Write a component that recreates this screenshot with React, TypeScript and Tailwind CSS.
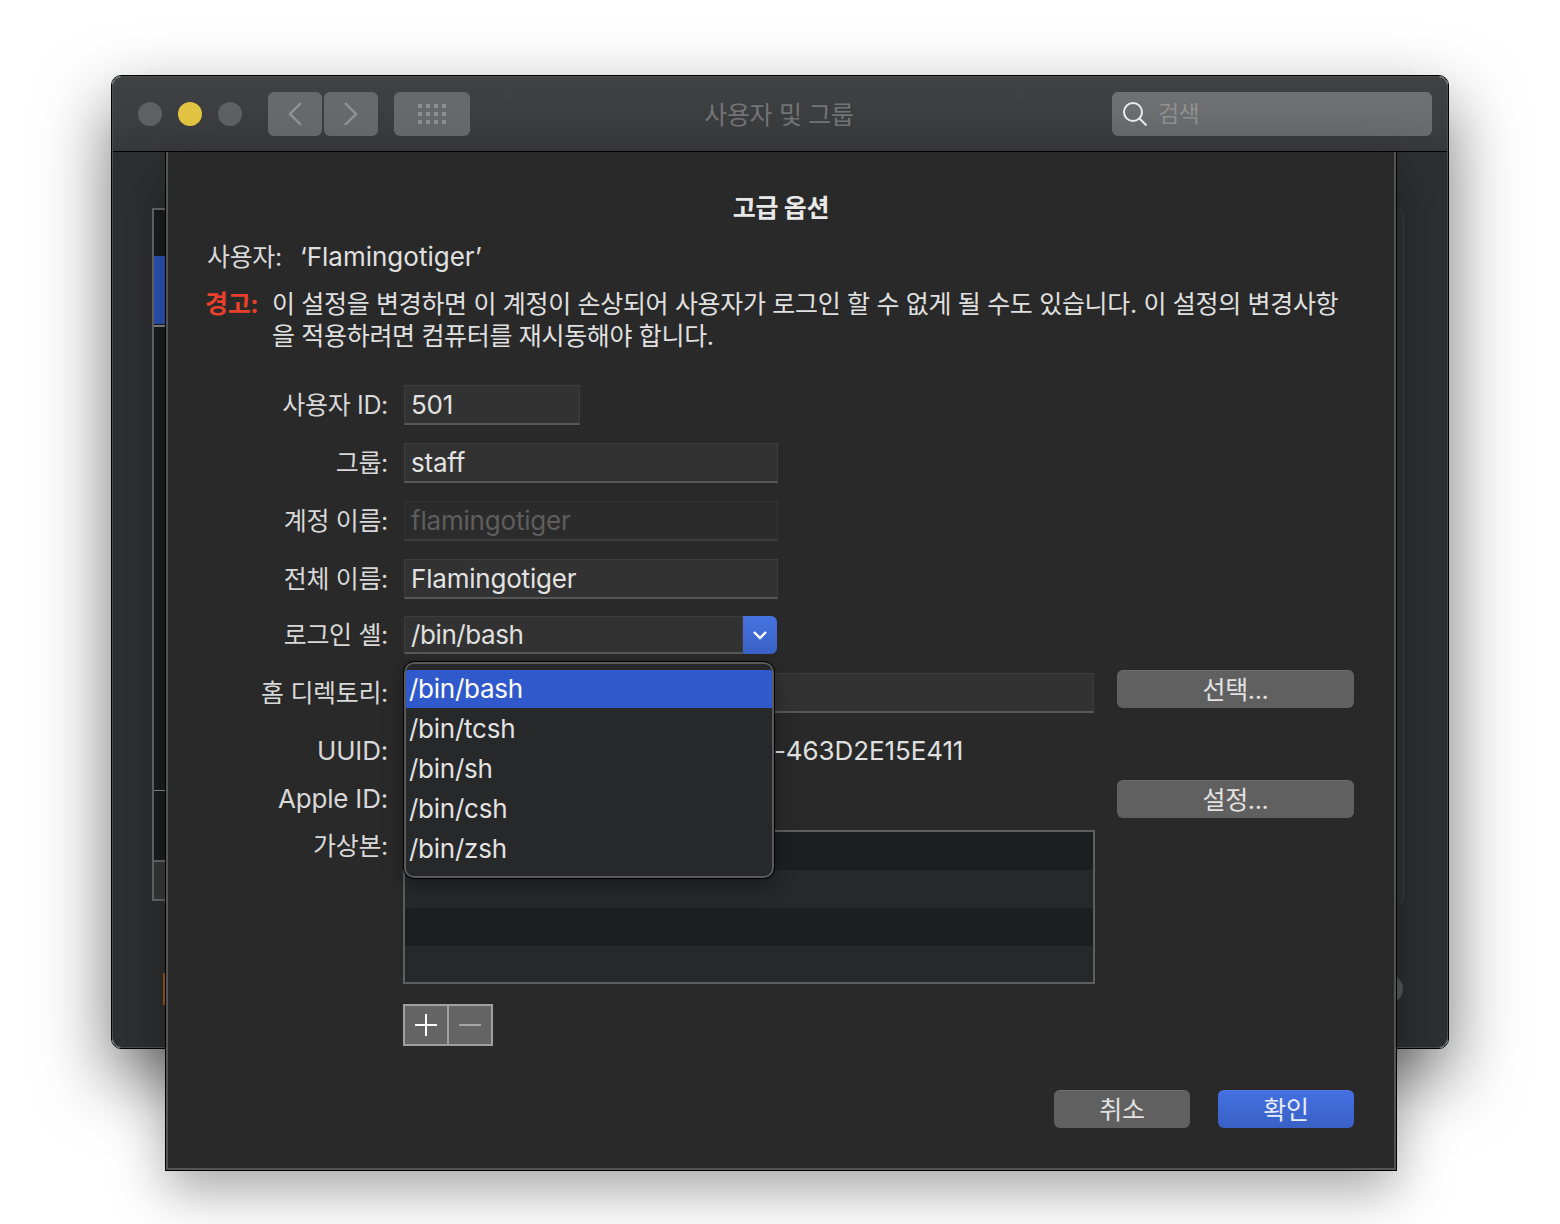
import type { ReactNode } from "react";

const shells = ["/bin/bash", "/bin/tcsh", "/bin/sh", "/bin/csh", "/bin/zsh"];

const Ko = ({ children, className = "" }: { children: ReactNode; className?: string }) => (
  <span className={`text-[25px] tracking-[-0.33px] ${className}`}>{children}</span>
);

const Field = ({ value, width = "w-[374px]", disabled = false }: { value?: string; width?: string; disabled?: boolean }) => (
  <div
    className={`h-10 ${width} flex items-center px-[6px] border border-b-2 ${
      disabled
        ? "bg-[#2b2b2b] border-[#343434] border-b-[#3c3c3c] text-[#5e5e5e]"
        : "bg-[#323232] border-[#3d3d3d] border-b-[#585858] text-[#e2e2e2]"
    }`}
  >
    {value}
  </div>
);

const Row = ({ label, className = "h-10", children }: { label: ReactNode; className?: string; children?: ReactNode }) => (
  <div className={`flex items-center ${className}`}>
    <div className="w-[220px] text-right shrink-0 text-[#d8d8d8]">{label}</div>
    <div className="ml-4 flex items-center grow">{children}</div>
  </div>
);

const MacButton = ({ label, width = "w-[237px]", primary = false }: { label: string; width?: string; primary?: boolean }) => (
  <button
    className={`block h-[38px] ${width} rounded-md border-t text-center ${
      primary
        ? "bg-gradient-to-b from-[#4470e2] to-[#3960c4] border-[#5079e6] text-[#e8edfb]"
        : "bg-[#606060] border-[#6c6c6c] text-[#e2e2e2]"
    }`}
  >
    <Ko>{label}</Ko>
  </button>
);

const Toolbar = () => (
  <div className="h-[75px] flex items-center border-b border-black bg-gradient-to-b from-[#414245] to-[#38393b]">
    <div className="flex items-center gap-4 ml-[25px]">
      <div className="w-6 h-6 rounded-full bg-[#5f6063]" />
      <div className="w-6 h-6 rounded-full bg-[#e2c342]" />
      <div className="w-6 h-6 rounded-full bg-[#5f6063]" />
    </div>
    <div className="flex gap-0.5 ml-[26px]">
      <div className="w-[54px] h-11 rounded-md bg-[#68696b] flex items-center justify-center">
        <svg width="16" height="26" viewBox="0 0 16 26" fill="none" stroke="#929395" strokeWidth="2.4">
          <path d="M14 2 3 13l11 11" />
        </svg>
      </div>
      <div className="w-[54px] h-11 rounded-md bg-[#68696b] flex items-center justify-center">
        <svg width="16" height="26" viewBox="0 0 16 26" fill="none" stroke="#929395" strokeWidth="2.4">
          <path d="m2 2 11 11L2 24" />
        </svg>
      </div>
    </div>
    <div className="w-[76px] h-11 rounded-md bg-[#68696b] ml-4 flex items-center justify-center">
      <div className="grid grid-cols-4 gap-x-1 gap-y-1">
        {Array.from({ length: 12 }).map((_, i) => (
          <div key={i} className="w-1 h-1 bg-[#8e8f91]" />
        ))}
      </div>
    </div>
    <div className="grow text-center text-[#737476] pr-[24px] mt-0.5">
      <Ko>사용자 및 그룹</Ko>
    </div>
    <div className="w-[320px] h-11 mr-[15px] rounded-md bg-gradient-to-b from-[#707173] to-[#68696b] flex items-center pl-[10px]">
      <svg width="26" height="26" viewBox="0 0 26 26" fill="none" stroke="#ececec" strokeWidth="2">
        <circle cx="11" cy="11" r="9" />
        <path d="m17.5 17.5 7 7" />
      </svg>
      <span className="ml-[10px] text-[23px] tracking-[-0.6px] text-[#8f9092]">검색</span>
    </div>
  </div>
);

const BackgroundBody = () => (
  <div className="flex justify-between pl-[39px] pr-[43px] pt-14 h-[895px] bg-[#2e2f31]">
    <div className="w-10">
      <div className="h-[693px] border-2 border-[#6a6a6a] bg-[#1c1d1f] flex flex-col">
        <div className="h-[46px]" />
        <div className="h-[68px] bg-[#2e55bb]" />
        <div className="h-[2px] bg-[#8a8a8a] mt-px" />
        <div className="h-[463px]" />
        <div className="h-px bg-[#8a8a8a]" />
        <div className="h-[69px]" />
        <div className="grow border-t-2 border-[#6a6a6a] bg-[#3a3a3a]" />
      </div>
      <div className="ml-[11px] mt-[72px] w-[2px] h-8 bg-[#a85a10]" />
    </div>
    <div className="w-10">
      <div className="h-[697px] rounded-lg border border-[#3e3f41] bg-[#313234]" />
      <div className="mt-[70px] ml-[11px] w-7 h-7 rounded-full bg-[#58595b]" />
    </div>
  </div>
);

const ShellMenu = () => (
  <div className="absolute left-[236px] top-[510px] w-[370px] h-[216px] rounded-[10px] border-2 border-[#5a5a5a] outline outline-black bg-[#27282a] pt-1.5 overflow-hidden tracking-[-0.25px] shadow-[0_8px_20px_rgba(0,0,0,0.35)]">
    {shells.map((s, i) => (
      <div
        key={s}
        className={`pl-[3px] flex items-center ${i === 0 ? "h-[38px] bg-[#3059cb] text-white" : "h-10 text-[#e2e2e2]"} ${
          i === 1 ? "mt-px" : ""
        }`}
      >
        {s}
      </div>
    ))}
  </div>
);

const Sheet = () => (
  <div className="absolute left-[165px] top-[152px] w-[1232px] h-[1019px] border border-black border-t-0 shadow-[0_20px_50px_rgba(0,0,0,0.35)]">
    <div className="relative h-full border-2 border-t-0 border-[#545454] bg-[#292929] text-[#e0e0e0]">
      <div className="pt-10 h-[71px] text-center font-bold text-[#e8e8e8]">
        <Ko>고급 옵션</Ko>
      </div>
      <div className="mt-[18px] h-8 ml-[39px] flex">
        <Ko className="text-[#d8d8d8]">사용자:</Ko>
        <span className="ml-[18px] tracking-normal">‘Flamingotiger’</span>
      </div>
      <div className="mt-[15px] flex ml-[37px]">
        <Ko className="font-bold text-[#e8402a] w-[67px] shrink-0">경고:</Ko>
        <Ko className="whitespace-nowrap">
          이 설정을 변경하면 이 계정이 손상되어 사용자가 로그인 할 수 없게 될 수도 있습니다. 이 설정의 변경사항
          <br />을 적용하려면 컴퓨터를 재시동해야 합니다.
        </Ko>
      </div>

      <Row label={<Ko>사용자 ID:</Ko>} className="mt-[33px] h-10">
        <Field value="501" width="w-[176px]" />
      </Row>
      <Row label={<Ko>그룹:</Ko>} className="mt-[18px] h-10">
        <Field value="staff" />
      </Row>
      <Row label={<Ko>계정 이름:</Ko>} className="mt-[18px] h-10">
        <Field value="flamingotiger" disabled />
      </Row>
      <Row label={<Ko>전체 이름:</Ko>} className="mt-[18px] h-10">
        <Field value="Flamingotiger" />
      </Row>
      <Row label={<Ko>로그인 셸:</Ko>} className="mt-[17px] h-[38px]">
        <div className="flex w-[373px] h-[38px]">
          <div className="grow flex items-center px-[6px] tracking-[-0.4px] bg-[#323232] border border-b-2 border-[#3d3d3d] border-b-[#585858]">/bin/bash</div>
          <div className="w-[34px] rounded-r-md bg-gradient-to-b from-[#4672e0] to-[#3a62c6] flex items-center justify-center">
            <svg width="16" height="10" viewBox="0 0 16 10" fill="none" stroke="#ffffff" strokeWidth="2.4">
              <path d="m2 2 6 6 6-6" />
            </svg>
          </div>
        </div>
      </Row>
      <div className="mt-[19px] flex items-center h-10">
        <div className="w-[220px] text-right text-[#d8d8d8]">
          <Ko>홈 디렉토리:</Ko>
        </div>
        <div className="ml-4">
          <Field width="w-[690px]" />
        </div>
        <div className="ml-[23px] -mt-2">
          <MacButton label="선택..." />
        </div>
      </div>
      <Row label="UUID:" className="mt-[22px] h-8">
        <span className="pl-[370px] tracking-[-0.1px]">-463D2E15E411</span>
      </Row>
      <div className="mt-[13px] flex items-center h-[38px]">
        <div className="w-[220px] text-right text-[#d8d8d8]">Apple ID:</div>
        <div className="ml-[729px]">
          <MacButton label="설정..." />
        </div>
      </div>
      <div className="mt-3 flex items-start">
        <div className="w-[220px] text-right text-[#d8d8d8]">
          <Ko>가상본:</Ko>
        </div>
        <div className="ml-[15px] w-[692px] h-[154px] border-2 border-[#5e5e5e] bg-[#27282a]">
          <div className="h-[38px] bg-[#1d1e20]" />
          <div className="h-[38px] bg-[#27282a]" />
          <div className="h-[38px] bg-[#1d1e20]" />
        </div>
      </div>
      <div className="mt-5 ml-[235px] flex w-[90px] h-[42px] border-2 border-[#a0a0a0] bg-[#646464]">
        <div className="w-[44px] border-r-2 border-[#a0a0a0] flex items-center justify-center">
          <svg width="22" height="22" viewBox="0 0 22 22" stroke="#ffffff" strokeWidth="2">
            <path d="M11 0v22M0 11h22" />
          </svg>
        </div>
        <div className="grow flex items-center justify-center">
          <svg width="22" height="2" viewBox="0 0 22 2" stroke="#a6a6a6" strokeWidth="2">
            <path d="M0 1h22" />
          </svg>
        </div>
      </div>
      <div className="mt-[44px] flex justify-end gap-7 pr-[40px]">
        <MacButton label="취소" width="w-[136px]" />
        <MacButton label="확인" width="w-[136px]" primary />
      </div>

      <ShellMenu />
    </div>
  </div>
);

export default function App() {
  return (
    <div className="relative w-[1560px] h-[1224px] bg-white overflow-hidden font-[Inter,'Noto_Sans_CJK_KR',sans-serif] text-[26px] leading-8 tracking-[-0.2px]">
      <div className="absolute left-[111px] top-[75px] w-[1338px] h-[974px] rounded-[10px] border border-black shadow-[0_30px_70px_rgba(0,0,0,0.55)]">
        <div className="h-full rounded-[9px] border border-[#4c4d4f] overflow-hidden">
          <Toolbar />
          <BackgroundBody />
        </div>
      </div>
      <Sheet />
    </div>
  );
}
